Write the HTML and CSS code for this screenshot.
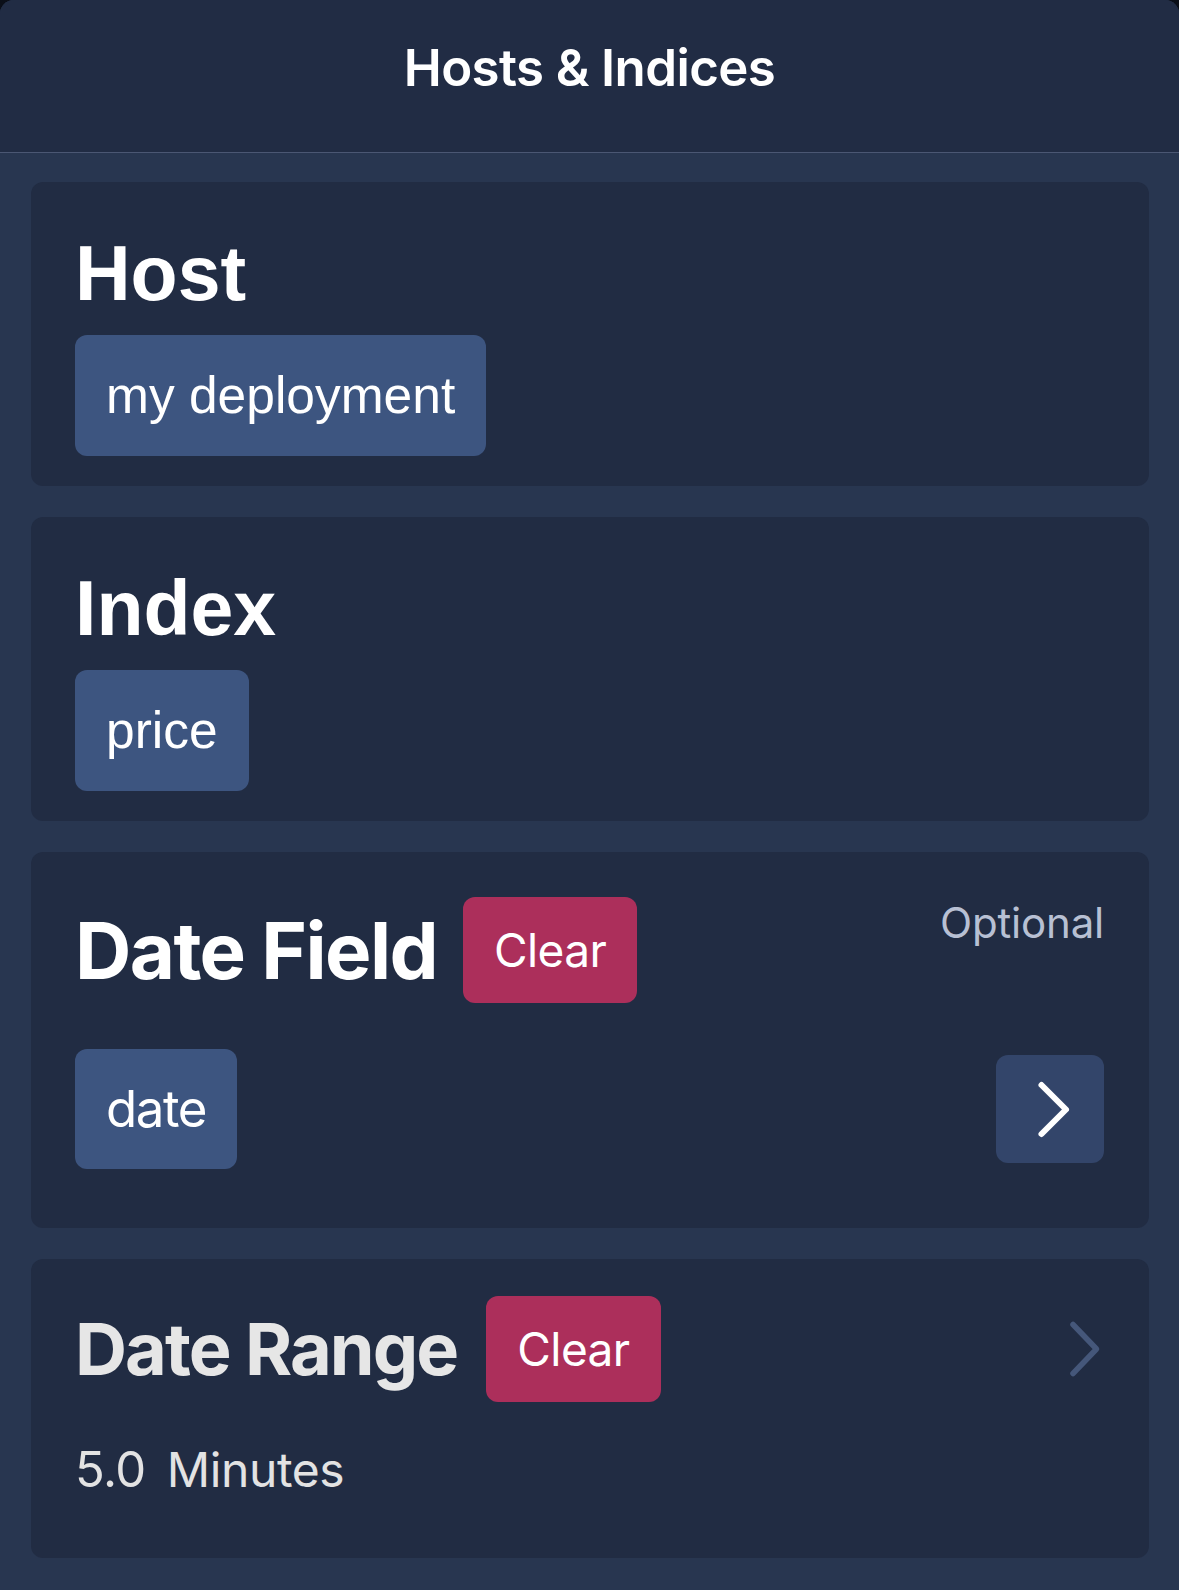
FILE: index.html
```
<!DOCTYPE html>
<html lang="en">
<head>
<meta charset="utf-8">
<title>Hosts &amp; Indices</title>
<link rel="stylesheet" href="styles.css">
</head>
<body>
<div class="sheet">
  <header class="nav">
    <h1 class="nav-title">Hosts &amp; Indices</h1>
  </header>
  <main class="content">
    <section class="card card-simple">
      <h2 class="simple-title">Host</h2>
      <span class="tag tag-helv">my deployment</span>
    </section>
    <section class="card card-simple">
      <h2 class="simple-title">Index</h2>
      <span class="tag tag-helv">price</span>
    </section>
    <section class="card card-field">
      <div class="field-head">
        <div class="title-group">
          <h2 class="field-title">Date Field</h2>
          <button class="clear-btn">Clear</button>
        </div>
        <span class="optional">Optional</span>
      </div>
      <div class="field-row">
        <span class="tag tag-inter">date</span>
        <button class="arrow-btn" aria-label="Select">
          <svg width="108" height="108" viewBox="0 0 108 108"><path d="M45.5 30 L70 54.5 L45.5 79" fill="none" stroke="#ffffff" stroke-width="6" stroke-linecap="round" stroke-linejoin="round"/></svg>
        </button>
      </div>
    </section>
    <section class="card card-range">
      <div class="range-head">
        <div class="title-group">
          <h2 class="range-title">Date Range</h2>
          <button class="clear-btn">Clear</button>
        </div>
        <svg class="range-chevron" width="40" height="60" viewBox="0 0 40 60"><path d="M9 5.5 L32.5 30 L9 54.5" fill="none" stroke="#45577a" stroke-width="5.5" stroke-linecap="round" stroke-linejoin="round"/></svg>
      </div>
      <p class="range-value"><span class="num">5.0</span><span class="unit">Minutes</span></p>
    </section>
  </main>
</div>
</body>
</html>
```
FILE: styles.css
```
* { box-sizing: border-box; }
html, body { margin: 0; padding: 0; }
body {
  background: #0b0f18;
  font-family: Inter, "Noto Sans", sans-serif;
  color: #ffffff;
}
.sheet {
  min-height: 1590px;
  background: #283650;
  border-radius: 14px 14px 0 0;
  overflow: hidden;
}
.nav {
  height: 153px;
  background: #212c44;
  border-bottom: 1px solid #4b5773;
  padding-top: 37px;
  text-align: center;
}
.nav-title {
  margin: 0;
  font-family: Inter, sans-serif;
  font-weight: 600;
  font-size: 51px;
  line-height: 62px;
  letter-spacing: -0.6px;
  color: #ffffff;
}
.content {
  display: flex;
  flex-direction: column;
  gap: 31px;
  padding: 29px 30px 32px 31px;
}
.card {
  background: #212c43;
  border-radius: 12px;
  display: flex;
  flex-direction: column;
}
.card-simple {
  padding: 47px 44px 30px 44px;
  align-items: flex-start;
}
.simple-title {
  margin: 0 0 18px 0;
  font-family: "Liberation Sans", Arial, sans-serif;
  font-weight: 700;
  font-size: 77px;
  line-height: 88px;
  color: #ffffff;
}
.tag {
  display: inline-block;
  background: #3d5580;
  color: #ffffff;
  border-radius: 12px;
}
.tag-helv {
  font-family: "Liberation Sans", Arial, sans-serif;
  font-size: 51.5px;
  line-height: 61px;
  padding: 30px 31px 30px 31px;
}
.tag-inter {
  font-family: Inter, sans-serif;
  font-size: 51px;
  line-height: 62px;
  padding: 29px 31px;
  letter-spacing: -1.4px;
}
.card-field {
  padding: 45px 45px 59px 44px;
}
.field-head {
  display: flex;
  align-items: flex-start;
}
.title-group {
  display: flex;
  align-items: center;
  gap: 26px;
}
.field-title {
  margin: 0;
  font-weight: 700;
  font-size: 78px;
  line-height: 95px;
  letter-spacing: -1.6px;
  color: #ffffff;
}
.clear-btn {
  font-family: Inter, sans-serif;
  font-size: 46px;
  line-height: 56px;
  padding: 25px 31px;
  background: #ac2f5b;
  color: #ffffff;
  border: none;
  border-radius: 12px;
  letter-spacing: -0.6px;
}
.optional {
  margin-left: auto;
  font-size: 42px;
  line-height: 51px;
  color: #b8c0d3;
  letter-spacing: -0.2px;
}
.field-row {
  margin-top: 46px;
  display: flex;
  align-items: center;
  justify-content: space-between;
}
.arrow-btn {
  width: 108px;
  height: 108px;
  padding: 0;
  border: none;
  border-radius: 12px;
  background: #33456a;
  display: flex;
}
.card-range {
  padding: 37px 45px 58px 44px;
}
.range-head {
  display: flex;
  align-items: center;
}
.range-title {
  margin: 0;
  font-weight: 700;
  font-size: 72px;
  line-height: 88px;
  letter-spacing: -1.9px;
  color: #e6e6e6;
}
.card-range .title-group {
  gap: 29px;
}
.range-chevron {
  margin-left: auto;
  display: block;
}
.range-value {
  margin: 38px 0 0 0;
  display: flex;
  align-items: baseline;
  gap: 21px;
  font-size: 49px;
  line-height: 60px;
  color: #e3e3e3;
}
.range-value .num {
  font-size: 49px;
  letter-spacing: -0.5px;
}
.range-value .unit {
  font-size: 48px;
  letter-spacing: -0.4px;
}
```
